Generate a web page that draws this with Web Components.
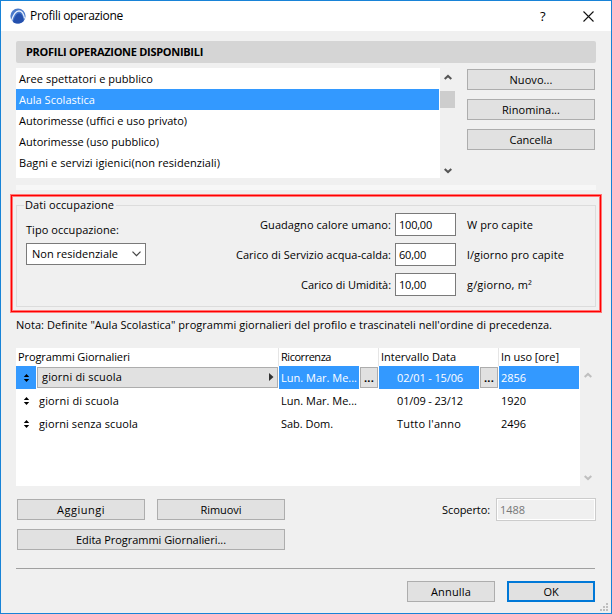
<!DOCTYPE html>
<html lang="it"><head><meta charset="utf-8"><title>Profili operazione</title>
<style>
html,body{margin:0;padding:0;width:612px;height:614px;overflow:hidden;background:#f0f0f0}
</style></head><body>
<profile-dialog></profile-dialog>
<script>
const define = (name, html, setup) => customElements.define(name, class extends HTMLElement {
  connectedCallback() {
    if (this.shadowRoot) return;
    const t = document.createElement('template');
    t.innerHTML = '<style>*{box-sizing:border-box}:host{box-sizing:border-box}</style>' + html;
    this.attachShadow({mode: 'open'}).append(t.content.cloneNode(true));
    if (setup) setup(this, this.shadowRoot);
  }
});

// Text label tracked so that it fills the width given in "w".
define('ui-text', `<style>:host{display:inline-block;white-space:pre;line-height:16px;height:16px;flex:none}
span{display:inline-block}</style><span><slot></slot></span>`, (el, root) => {
  const s = root.querySelector('span'), w = +el.getAttribute('w');
  if (!w) return;
  s.style.letterSpacing = (w - s.getBoundingClientRect().width) / el.textContent.length + 'px';
});

define('ui-button', `<style>:host{display:flex;align-items:center;justify-content:center;height:21px;background:#e1e1e1;border:1px solid #adadad;flex:none;padding-top:1px}
:host([primary]){border:2px solid #0078d7}</style><slot></slot>`);

define('ui-field', `<style>:host{display:flex;align-items:center;width:61px;height:23px;background:#fff;border:1px solid #7a7a7a;padding:1px 0 0 3px}
:host([disabled]){width:100px;background:#f0f0f0;border-color:#ccc;box-shadow:inset 0 0 0 1px #fff;color:#777}</style><slot></slot>`);

define('scroll-chevron', `<style>:host{display:block;width:8px;height:7px;color:#555}:host([dim]){color:#bfbfbf}:host([down]) svg{transform:scaleY(-1)}svg{display:block}</style>
<svg width="8" height="7"><path d="M.7 5 4 1.9 7.3 5" fill="none" stroke="currentColor" stroke-width="2"/></svg>`);

define('profile-list', `<style>:host{display:flex;width:439px;height:110px}
.items{width:424px;background:#fff}
.row{height:21px;padding:3px 0 0 3px;width:423px}.sel{background:#3399ff;color:#fff}
.bar{width:15px;display:flex;flex-direction:column;align-items:center;padding:6px 0 4px}
.thumb{width:15px;height:17px;background:#cdcdcd;margin-top:10px}.fill{flex:1}</style>
<div class="items"><div class="row"><ui-text w="134">Aree spettatori e pubblico</ui-text></div>
<div class="row sel"><ui-text w="76">Aula Scolastica</ui-text></div>
<div class="row"><ui-text w="168">Autorimesse (uffici e uso privato)</ui-text></div>
<div class="row"><ui-text w="140">Autorimesse (uso pubblico)</ui-text></div>
<div class="row"><ui-text w="201">Bagni e servizi igienici(non residenziali)</ui-text></div></div>
<div class="bar"><scroll-chevron></scroll-chevron><div class="thumb"></div><div class="fill"></div><scroll-chevron down></scroll-chevron></div>`);

define('occupation-group', `<style>:host{display:block;width:592px;height:119px;border:1px solid #ff7878;box-shadow:inset 0 0 0 1px #f00,inset 0 0 0 2px #ff7878;padding:2px 5px 0}
fieldset{margin:0;border:1px solid #dcdcdc;width:580px;height:110px;padding:0 9px;min-width:0;display:block}
legend{padding:0 2px 0 1px;margin-left:-2px;height:16px;line-height:16px}
legend ui-text{display:block}
.body{display:flex;justify-content:space-between}
.type{padding-top:9px;display:flex;flex-direction:column}
.select{display:flex;align-items:center;justify-content:space-between;width:120px;height:22px;background:#fff;border:1px solid #7a7a7a;padding:0 4px 0 5px;margin-top:5px}
.grid{display:grid;grid-template-columns:auto 61px 119px;column-gap:4px;row-gap:7px;padding-right:7px;align-items:center;justify-items:end}
.unit{justify-self:start;padding-left:7px}
.grid>ui-text{margin-top:1px}
</style><fieldset><legend><ui-text w="89">Dati occupazione</ui-text></legend><div class="body">
<div class="type"><ui-text w="93">Tipo occupazione:</ui-text><div class="select"><ui-text w="86">Non residenziale</ui-text>
<svg width="9" height="6"><path d="M.5.7 4.5 4.7 8.5.7" fill="none" stroke="#444" stroke-width="1.2"/></svg></div></div>
<div class="grid"><ui-text w="131">Guadagno calore umano:</ui-text><ui-field><ui-text w="33">100,00</ui-text></ui-field><ui-text class="unit" w="66">W pro capite</ui-text>
<ui-text w="155">Carico di Servizio acqua-calda:</ui-text><ui-field><ui-text w="27">60,00</ui-text></ui-field><ui-text class="unit" w="97">l/giorno pro capite</ui-text>
<ui-text w="90">Carico di Umidità:</ui-text><ui-field><ui-text w="27">10,00</ui-text></ui-field><ui-text class="unit" w="65">g/giorno, m²</ui-text></div></div></fieldset>`);

define('sort-handle', `<style>:host{display:flex;width:20px;justify-content:center;flex:none}</style>
<svg width="7" height="8"><path d="M3.5 0 6.2 3H.8ZM3.5 8 .8 5h5.4Z" fill="currentColor"/></svg>`);

define('schedule-table', `<style>:host{display:flex;width:580px;height:138px}
.main{width:564px;background:#fff;padding-right:1px}.r{display:grid;grid-template-columns:263px 100px 120px 80px;height:23px}
.r>*{display:flex;align-items:center;padding-left:2px;min-width:0}
.head{height:18px}.head>*{border-left:1px solid #e5e5e5;margin-left:-1px;padding-left:2px}.head>:first-child{border:0;margin:0}
.name{padding-left:0!important}.name>ui-text{margin-left:3px}.date{padding-left:18px!important}
.sel{background:#39f;color:#fff}.sel .name{color:#000;background:#fff}
.sel sort-handle{background:#39f;height:23px;align-items:center}
.sel .name{gap:1px;padding-right:1px}
.menu{display:flex;align-items:center;justify-content:space-between;flex:1;height:21px;background:#e1e1e1;border:1px solid #adadad;padding:0 3px 1px 4px}
.dots{width:20px;background:#fff;height:23px;display:flex;align-items:center;justify-content:center;margin-left:auto;color:#000;flex:none}
.dots ui-button{width:18px;height:21px}
.bar{width:16px;display:flex;flex-direction:column;justify-content:space-between;align-items:center;padding:24px 0 5px 0}
</style><div class="main">
<div class="r head"><div><ui-text w="112">Programmi Giornalieri</ui-text></div><div><ui-text w="50">Ricorrenza</ui-text></div><div><ui-text w="75">Intervallo Data</ui-text></div><div><ui-text w="58">In uso [ore]</ui-text></div></div>
<div class="r sel"><div class="name"><sort-handle></sort-handle><div class="menu"><ui-text w="80">giorni di scuola</ui-text><svg width="5" height="8"><path d="M0 0 4.5 4 0 8Z" fill="#333"/></svg></div></div><div><ui-text w="76">Lun. Mar. Me...</ui-text><div class="dots"><ui-button><ui-text w="10"><b>...</b></ui-text></ui-button></div></div><div class="date"><ui-text w="66">02/01 - 15/06</ui-text><div class="dots"><ui-button><ui-text w="10"><b>...</b></ui-text></ui-button></div></div><div><ui-text w="25">2856</ui-text></div></div>
<div class="r"><div class="name"><sort-handle></sort-handle><ui-text w="80">giorni di scuola</ui-text></div><div><ui-text w="76">Lun. Mar. Me...</ui-text></div><div class="date"><ui-text w="66">01/09 - 23/12</ui-text></div><div><ui-text w="25">1920</ui-text></div></div>
<div class="r"><div class="name"><sort-handle></sort-handle><ui-text w="99">giorni senza scuola</ui-text></div><div><ui-text w="52">Sab. Dom.</ui-text></div><div class="date"><ui-text w="64">Tutto l'anno</ui-text></div><div><ui-text w="25">2496</ui-text></div></div>
</div><div class="bar"><scroll-chevron dim></scroll-chevron><scroll-chevron dim down></scroll-chevron></div>`);

define('title-bar', `<style>:host{display:flex;align-items:center;height:30px;background:#fff;padding:0 17px 0 9px;font-size:12px}
.logo{margin-right:4px}.sp{flex:1}.q{margin-right:36px;font-size:13px;font-weight:500}svg{flex:none}</style>
<svg class="logo" width="16" height="16" viewBox="0 0 16 16"><circle cx="8" cy="8" r="7.6" fill="#4a7acb"/><path d="M1.500 12.800C3 7.500 5.500 3 9 2.800c2.600 0 4.700 3 5.500 7.700" fill="none" stroke="#e8f0fc" stroke-width="1.300"/><path d="M3 14C4.200 9.500 6.500 5.300 9 5.300c2.600 0 4.200 3.200 4.700 7.700C10.500 16.300 5.800 16.300 3 14Z" fill="#2450ad"/></svg>
<ui-text w="93">Profili operazione</ui-text><span class="sp"></span><ui-text class="q" w="7">?</ui-text>
<svg width="11" height="11"><path d="M.5.5l10 10M10.500.5l-10 10" stroke="#111" stroke-width="1.100"/></svg>`);

define('resize-grip', `<style>:host{position:absolute;right:3px;bottom:2px;width:8px;height:8px}svg{display:block}</style>
<svg width="8" height="8" fill="#bfbfbf"><path d="M6 0h2v2H6zM3 3h2v2H3zM6 3h2v2H6zM0 6h2v2H0zM3 6h2v2H3zM6 6h2v2H6z"/></svg>`);

define('profile-dialog', `<style>:host{display:block;position:relative;width:612px;height:614px;background:#f0f0f0;border:1px solid #1883d7;font:11px/16px "Open Sans","Noto Sans",sans-serif;color:#000}
main{padding:10px 15px 0;display:flex;flex-direction:column}
.band{height:22px;background:#d5d5d5;border-radius:2px;padding:3px 0 0 10px;font-weight:700}
.top{display:flex;gap:12px;margin-top:5px}.btns{display:flex;flex-direction:column;gap:9px;padding-top:1px}.btns ui-button{width:128px}
.strip{height:5px;background:#f7f7f7;margin-top:7px}
occupation-group{margin:4px 0 0 -6px}.note{margin-top:4px}
schedule-table{margin-top:15px}
.actions{display:flex;justify-content:space-between;margin-top:12px;height:53px}
.left{display:grid;grid-template-columns:128px 128px;gap:9px 12px;padding:1px 0 0 1px;align-content:start}.wide{grid-column:span 2}
.right{display:flex;gap:6px;height:23px;align-items:center}
hr{border:0;height:1px;background:#a0a0a0;margin:17px 1px 0 0;width:579px}
.foot{display:flex;justify-content:flex-end;gap:12px;padding-right:1px;margin-top:12px}.foot ui-button{width:88px}
</style><title-bar></title-bar><main>
<div class="band"><ui-text w="177">PROFILI OPERAZIONE DISPONIBILI</ui-text></div>
<div class="top"><profile-list></profile-list><div class="btns"><ui-button><ui-text w="43">Nuovo...</ui-text></ui-button><ui-button><ui-text w="58">Rinomina...</ui-text></ui-button><ui-button><ui-text w="43">Cancella</ui-text></ui-button></div></div>
<div class="strip"></div>
<occupation-group></occupation-group>
<ui-text class="note" w="536">Nota: Definite "Aula Scolastica" programmi giornalieri del profilo e trascinateli nell'ordine di precedenza.</ui-text>
<schedule-table></schedule-table>
<div class="actions"><div class="left"><ui-button><ui-text w="48">Aggiungi</ui-text></ui-button><ui-button><ui-text w="41">Rimuovi</ui-text></ui-button><ui-button class="wide"><ui-text w="150">Edita Programmi Giornalieri...</ui-text></ui-button></div>
<div class="right"><ui-text w="48">Scoperto:</ui-text><ui-field disabled><ui-text w="25">1488</ui-text></ui-field></div></div>
<hr><div class="foot"><ui-button><ui-text w="40">Annulla</ui-text></ui-button><ui-button primary><ui-text w="15">OK</ui-text></ui-button></div>
</main><resize-grip></resize-grip>`);
</script></body></html>
